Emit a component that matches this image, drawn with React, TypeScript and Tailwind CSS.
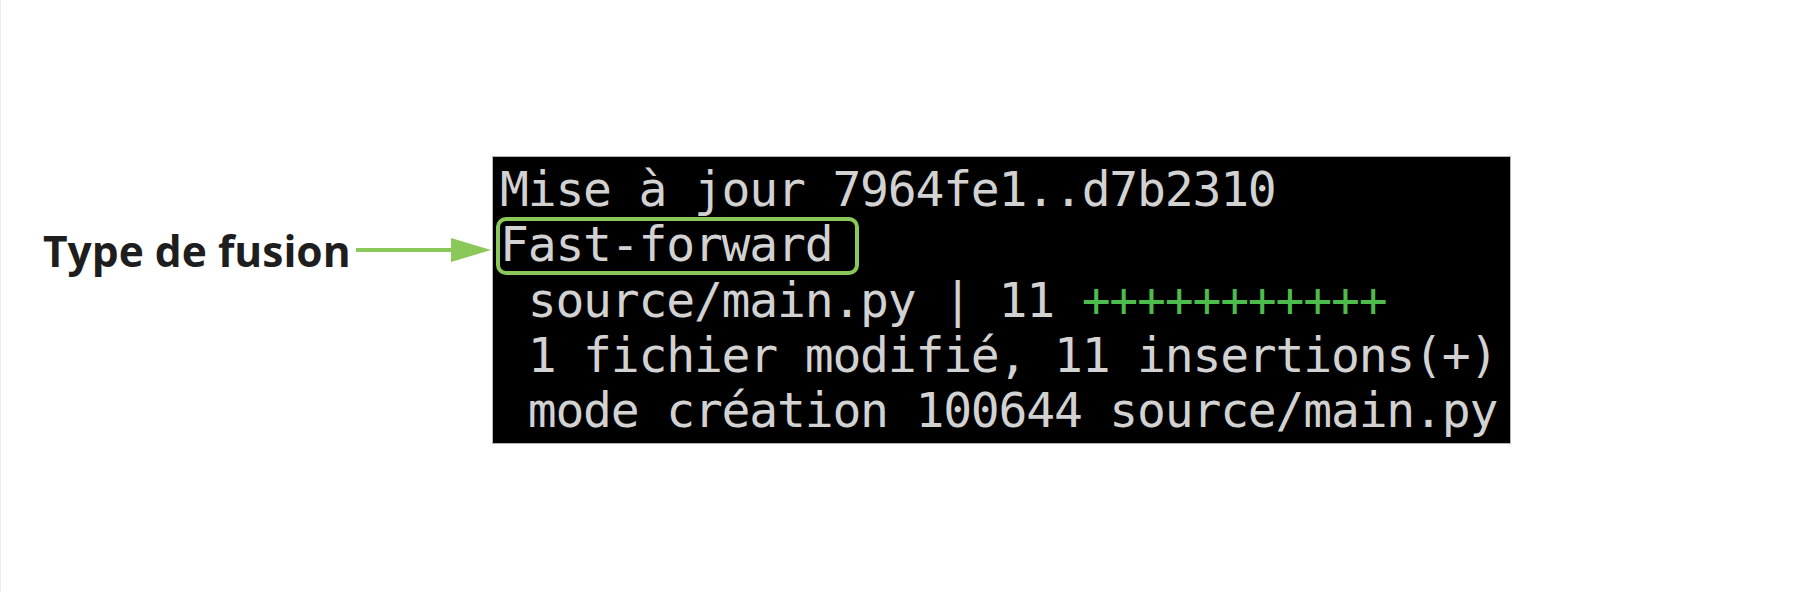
import React from "react";

export default function App() {
  const mono = { fontFamily: '"DejaVu Sans Mono", "Liberation Mono", monospace' };
  return (
    <div className="w-full h-[592px] bg-white border-l border-[#ececec] overflow-hidden">
      <div className="flex items-start pl-[42px] pt-[156px]">
        <div
          className="w-[313px] mt-[73px] text-[42.5px] leading-[44px] font-bold text-[#1e1e1e] whitespace-nowrap"
          style={{ fontFamily: '"Open Sans", "Noto Sans", sans-serif' }}
        >
          Type de fusion
        </div>
        <svg className="mt-[79px] shrink-0" width="136" height="30" viewBox="0 0 136 30">
          <line x1="0" y1="15" x2="100" y2="15" stroke="#8bc85a" strokeWidth="4" />
          <polygon points="95,3 135,15 95,27" fill="#8bc85a" />
        </svg>
        <div
          className="relative w-[1019px] h-[288px] bg-black border border-[#b5b5b5] pl-[7px] pt-[5px] text-[48px] leading-[55.3px] tracking-[-1.2px] text-[#d2d2d2] whitespace-pre"
          style={mono}
        >
          <div>Mise à jour 7964fe1..d7b2310</div>
          <div>Fast-forward</div>
          <div>
            {" source/main.py | 11 "}
            <span className="text-[#4cbc4c]">+++++++++++</span>
          </div>
          <div> 1 fichier modifié, 11 insertions(+)</div>
          <div> mode création 100644 source/main.py</div>
          <div className="absolute left-[3px] top-[60px] w-[363px] h-[58px] rounded-[10px] border-[4px] border-[#8bc85a]" />
        </div>
      </div>
    </div>
  );
}
